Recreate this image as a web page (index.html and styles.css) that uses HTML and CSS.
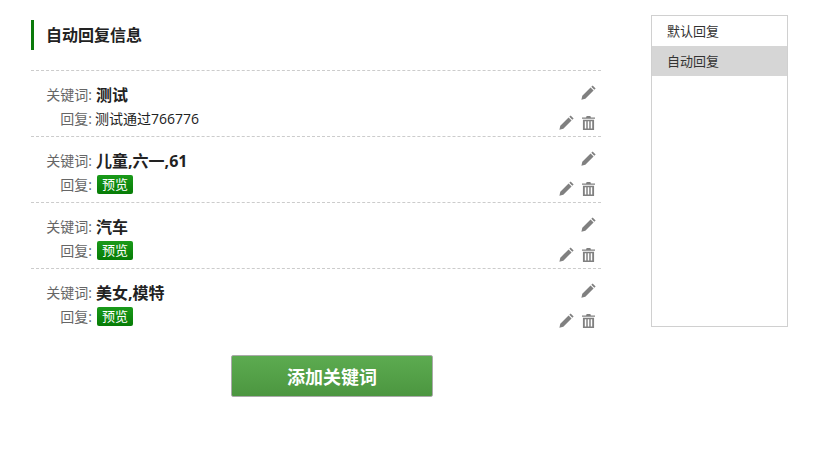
FILE: index.html
```html
<!DOCTYPE html>
<html lang="zh-CN">
<head>
    <meta charset="UTF-8">
    <title>自动回复信息</title>
    <link rel="stylesheet" href="styles.css">
</head>
<body>
    <svg class="sprites" width="0" height="0">
        <symbol id="pencil" viewBox="0 0 16 16">
            <path d="M12.4.4 15.6 3.6 14.2 5 11 1.8Z"/>
            <path d="M10.2 2.6 13.4 5.8 4.6 14.6 .4 15.6 1.4 11.4Z"/>
        </symbol>
        <symbol id="trash" viewBox="0 0 14 15">
            <path d="M5 0H9L9.6 1.6H14V3H0V1.6H4.4Z"/>
            <path d="M1 4H13V15H1ZM3 5.5V13.5H4.6V5.5ZM6.2 5.5V13.5H7.8V5.5ZM9.4 5.5V13.5H11V5.5Z" fill-rule="evenodd"/>
        </symbol>
    </svg>

    <div class="wrapper">
        <div class="main">
            <h2 class="title">自动回复信息</h2>

            <div class="rule">
                <div class="rule_line">
                    <span class="label">关键词:</span>
                    <span class="keyword">测试</span>
                    <svg class="icon icon_top"><use href="#pencil"/></svg>
                </div>
                <div class="rule_line">
                    <span class="label">回复:</span>
                    <span class="reply">测试通过766776</span>
                    <svg class="icon icon_edit"><use href="#pencil"/></svg>
                    <svg class="icon icon_del"><use href="#trash"/></svg>
                </div>
            </div>

            <div class="rule">
                <div class="rule_line">
                    <span class="label">关键词:</span>
                    <span class="keyword">儿童,六一,61</span>
                    <svg class="icon icon_top"><use href="#pencil"/></svg>
                </div>
                <div class="rule_line">
                    <span class="label">回复:</span>
                    <span class="tag">预览</span>
                    <svg class="icon icon_edit"><use href="#pencil"/></svg>
                    <svg class="icon icon_del"><use href="#trash"/></svg>
                </div>
            </div>

            <div class="rule">
                <div class="rule_line">
                    <span class="label">关键词:</span>
                    <span class="keyword">汽车</span>
                    <svg class="icon icon_top"><use href="#pencil"/></svg>
                </div>
                <div class="rule_line">
                    <span class="label">回复:</span>
                    <span class="tag">预览</span>
                    <svg class="icon icon_edit"><use href="#pencil"/></svg>
                    <svg class="icon icon_del"><use href="#trash"/></svg>
                </div>
            </div>

            <div class="rule">
                <div class="rule_line">
                    <span class="label">关键词:</span>
                    <span class="keyword">美女,模特</span>
                    <svg class="icon icon_top"><use href="#pencil"/></svg>
                </div>
                <div class="rule_line">
                    <span class="label">回复:</span>
                    <span class="tag">预览</span>
                    <svg class="icon icon_edit"><use href="#pencil"/></svg>
                    <svg class="icon icon_del"><use href="#trash"/></svg>
                </div>
            </div>

            <div class="actions">
                <button class="btn">添加关键词</button>
            </div>
        </div>

        <ul class="side">
            <li class="side_item">默认回复</li>
            <li class="side_item side_active">自动回复</li>
        </ul>
    </div>
</body>
</html>
```

FILE: styles.css
```css
html, body {
    margin: 0;
    padding: 0;
    background-color: #fff;
}

body {
    font-family: "Open Sans", "Noto Sans CJK SC", sans-serif;
    font-size: 14px;
    color: #222;
}

.sprites {
    display: block;
    height: 0;
}

.wrapper {
    display: flex;
    align-items: flex-start;
    padding: 15px 0 0 31px;
}

.main {
    width: 570px;
    margin-right: 50px;
    padding-top: 5px;
}

.title {
    height: 30px;
    margin: 0 0 20px 0;
    padding-left: 12px;
    border-left: 3px solid #0a7a0a;
    font-size: 16px;
    font-weight: 700;
    line-height: 30px;
    color: #222;
}

.rule {
    height: 54px;
    padding-top: 11px;
    border-top: 1px dashed #ccc;
}

.rule:last-of-type {
    border-bottom: 1px dashed #ccc;
}

.rule_line {
    display: flex;
    align-items: center;
    height: 24px;
    padding-right: 6px;
}

.label {
    width: 61px;
    margin-right: 4px;
    text-align: right;
    color: #666;
}

.keyword {
    font-size: 16px;
    font-weight: 700;
    color: #222;
}

.reply {
    margin-left: -1px;
    color: #222;
}

.tag {
    margin-left: 1px;
    padding: 0 5px;
    height: 19px;
    line-height: 18px;
    font-size: 13px;
    color: #fff;
    background: linear-gradient(#1a9a1a, #067c06);
    border-radius: 2px;
}

.icon {
    display: block;
    fill: #808080;
}

.icon_top {
    width: 15px;
    height: 15px;
    margin-left: auto;
    margin-right: -1px;
    margin-bottom: 3px;
}

.icon_edit {
    width: 15px;
    height: 15px;
    margin-left: auto;
    margin-top: 8px;
}

.icon_del {
    width: 13px;
    height: 14px;
    margin-left: 8px;
    margin-top: 9px;
}

.actions {
    padding: 21px 0 0 200px;
}

.btn {
    width: 202px;
    height: 42px;
    border: 1px solid #aaa;
    border-radius: 2px;
    background: linear-gradient(#5cab50, #4c9640);
    color: #fff;
    font-family: inherit;
    font-size: 18px;
    font-weight: 700;
}

.side {
    width: 135px;
    height: 310px;
    margin: 0;
    padding: 0;
    list-style: none;
    border: 1px solid #d0d0d0;
}

.side_item {
    height: 30px;
    padding-left: 15px;
    line-height: 30px;
    font-size: 13px;
    color: #333;
}

.side_active {
    background-color: #d6d6d6;
}
```
